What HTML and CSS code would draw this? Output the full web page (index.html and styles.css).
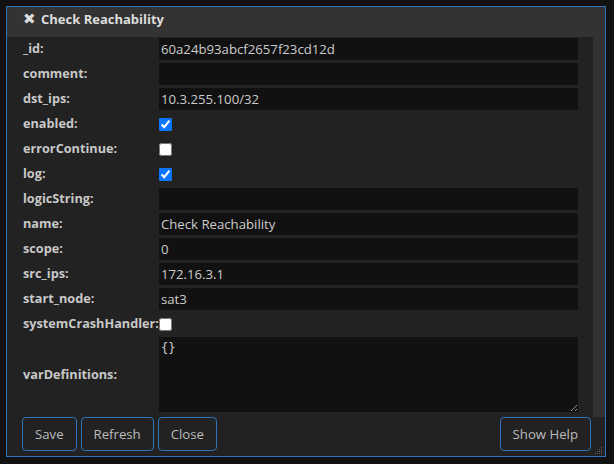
FILE: index.html
```html
<!DOCTYPE html>
<html>
<head>
<meta charset="utf-8">
<link rel="stylesheet" href="styles.css">
</head>
<body>
<div class="dialog">
  <div class="titlebar"><span class="x">✖</span><span class="ttl">Check Reachability</span></div>
  <div class="body">
    <div class="content">
      <div class="form">
        <label class="lbl">_id:</label><input class="txt" type="text" value="60a24b93abcf2657f23cd12d">
        <label class="lbl">comment:</label><input class="txt" type="text" value="">
        <label class="lbl">dst_ips:</label><input class="txt" type="text" value="10.3.255.100/32">
        <label class="lbl">enabled:</label><div class="chkcell"><input class="chk" type="checkbox" checked></div>
        <label class="lbl">errorContinue:</label><div class="chkcell"><input class="chk" type="checkbox"></div>
        <label class="lbl">log:</label><div class="chkcell"><input class="chk" type="checkbox" checked></div>
        <label class="lbl">logicString:</label><input class="txt" type="text" value="">
        <label class="lbl">name:</label><input class="txt" type="text" value="Check Reachability">
        <label class="lbl">scope:</label><input class="txt" type="text" value="0">
        <label class="lbl">src_ips:</label><input class="txt" type="text" value="172.16.3.1">
        <label class="lbl">start_node:</label><input class="txt" type="text" value="sat3">
        <label class="lbl">systemCrashHandler:</label><div class="chkcell"><input class="chk" type="checkbox"></div>
        <label class="lbl">varDefinitions:</label><textarea class="area">{}</textarea>
      </div>
    </div>
    <div class="track"></div>
  </div>
  <div class="buttons">
    <button class="btn">Save</button>
    <button class="btn">Refresh</button>
    <button class="btn">Close</button>
    <span class="spacer"></span>
    <button class="btn">Show Help</button>
  </div>
  <svg class="grip" width="8" height="8" viewBox="0 0 8 8">
    <g fill="#666">
      <rect x="6" y="1" width="1" height="1"/>
      <rect x="4" y="3" width="1" height="1"/><rect x="6" y="3" width="1" height="1"/>
      <rect x="2" y="5" width="1" height="1"/><rect x="4" y="5" width="1" height="1"/><rect x="6" y="5" width="1" height="1"/>
      <rect x="0" y="7" width="1" height="1"/><rect x="2" y="7" width="1" height="1"/><rect x="4" y="7" width="1" height="1"/><rect x="6" y="7" width="1" height="1"/>
    </g>
  </svg>
</div>
</body>
</html>
```
FILE: styles.css
```css
html, body {
  margin: 0;
  padding: 0;
  background: #111111;
}
body {
  font-family: "Open Sans", "Noto Sans", sans-serif;
  color: #cccccc;
}
.dialog {
  position: relative;
  box-sizing: border-box;
  margin: 6px;
  width: 600px;
  height: 451px;
  border: 1px solid #2f74b8;
  background: #333333;
  display: flex;
  flex-direction: column;
}
.titlebar {
  height: 30px;
  display: flex;
  align-items: center;
  padding-left: 16px;
  padding-bottom: 7px;
  box-sizing: border-box;
  background: #333333;
  color: #dddddd;
  font-weight: bold;
  font-size: 13px;
}
.titlebar .x {
  font-family: "DejaVu Sans", sans-serif;
  font-size: 15px;
  width: 18px;
}
.body {
  display: flex;
  height: 380px;
}
.content {
  flex: 1;
  background: #222222;
  padding: 1px 15px 0 16px;
}
.track {
  width: 12px;
  background: #333333;
}
.form {
  display: grid;
  grid-template-columns: max-content 1fr;
  row-gap: 3px;
  align-items: center;
}
.lbl {
  font-weight: bold;
  font-size: 12.7px;
  color: #c8c8c8;
  line-height: 20px;
  height: 22px;
}
.txt {
  box-sizing: border-box;
  height: 22px;
  border: none;
  margin: 0;
  padding: 0 2px;
  background: #111111;
  color: #cccccc;
  font-family: "Open Sans", "Noto Sans", sans-serif;
  font-size: 13.2px;
  outline: none;
}
.chkcell {
  height: 22px;
  display: flex;
  align-items: center;
}
.chk {
  margin: 0;
  width: 13px;
  height: 13px;
  accent-color: #0a75ff;
}
.area {
  box-sizing: border-box;
  height: 75px;
  margin: -1px 0 0 0;
  border: none;
  background: #111111;
  color: #cccccc;
  padding: 4px 2px;
  font-family: "DejaVu Sans Mono", monospace;
  font-size: 12px;
  outline: none;
  resize: vertical;
}
.buttons {
  flex: 1;
  display: flex;
  gap: 4px;
  background: #222222;
  padding: 0 14px 0 15px;
}
.spacer {
  flex: 1;
}
.btn {
  height: 34px;
  padding: 0 12px;
  background: #222222;
  border: 1px solid #2f74b8;
  border-radius: 4px;
  color: #bbbbbb;
  font-family: "Open Sans", "Noto Sans", sans-serif;
  font-size: 13.2px;
}
.grip {
  position: absolute;
  right: 2px;
  bottom: 2px;
}
```
